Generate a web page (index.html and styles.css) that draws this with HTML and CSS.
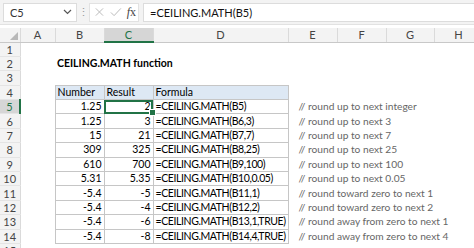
FILE: index.html
```html
<!DOCTYPE html>
<html lang="en">
<head>
  <meta charset="UTF-8">
  <title>CEILING.MATH function</title>
  <link rel="stylesheet" href="styles.css">
</head>
<body>
  <div class="fbar">
    <div class="namebox">
      <span>C5</span>
      <svg width="9" height="6" viewBox="0 0 9 6"><path d="M1 1 L4.5 4.5 L8 1" fill="none" stroke="#555" stroke-width="1.2"/></svg>
    </div>
    <div class="grip">⋮</div>
    <div class="tools">
      <svg width="12" height="12" viewBox="0 0 12 12"><path d="M2 2 L10 10 M10 2 L2 10" stroke="#bbb" stroke-width="1.1"/></svg>
      <svg width="13" height="12" viewBox="0 0 13 12"><path d="M1 6.5 L4.5 10 L12 2" fill="none" stroke="#bbb" stroke-width="1.1"/></svg>
      <span class="fx"><i>f</i>x</span>
    </div>
    <div class="formula">=CEILING.MATH(B5)</div>
  </div>

  <table class="sheet">
    <colgroup>
      <col style="width:20px"><col style="width:35px"><col style="width:49px"><col style="width:49px">
      <col style="width:135px"><col style="width:49px"><col style="width:49px"><col style="width:48px"><col style="width:49px">
    </colgroup>
    <tr class="colhead">
      <th class="corner"><span class="tri"></span></th>
      <th>A</th><th>B</th><th class="active">C</th><th>D</th><th>E</th><th>F</th><th>G</th><th>H</th>
    </tr>
    <tr><th>1</th><td></td><td></td><td></td><td></td><td></td><td></td><td></td><td></td></tr>
    <tr><th>2</th><td></td><td class="title">CEILING.MATH function</td><td></td><td></td><td></td><td></td><td></td><td></td></tr>
    <tr><th>3</th><td></td><td></td><td></td><td></td><td></td><td></td><td></td><td></td></tr>
    <tr><th>4</th><td></td><td class="b hd">Number</td><td class="b hd">Result</td><td class="b hd">Formula</td><td></td><td></td><td></td><td></td></tr>
    <tr><th class="active">5</th><td></td><td class="b num">1.25</td><td class="b num sel">2<span class="handle"></span></td><td class="b fm">=CEILING.MATH(B5)</td><td class="note">// round up to next integer</td><td></td><td></td><td></td></tr>
    <tr><th>6</th><td></td><td class="b num">1.25</td><td class="b num">3</td><td class="b fm">=CEILING.MATH(B6,3)</td><td class="note">// round up to next 3</td><td></td><td></td><td></td></tr>
    <tr><th>7</th><td></td><td class="b num">15</td><td class="b num">21</td><td class="b fm">=CEILING.MATH(B7,7)</td><td class="note">// round up to next 7</td><td></td><td></td><td></td></tr>
    <tr><th>8</th><td></td><td class="b num">309</td><td class="b num">325</td><td class="b fm">=CEILING.MATH(B8,25)</td><td class="note">// round up to next 25</td><td></td><td></td><td></td></tr>
    <tr><th>9</th><td></td><td class="b num">610</td><td class="b num">700</td><td class="b fm">=CEILING.MATH(B9,100)</td><td class="note">// round up to next 100</td><td></td><td></td><td></td></tr>
    <tr><th>10</th><td></td><td class="b num">5.31</td><td class="b num">5.35</td><td class="b fm">=CEILING.MATH(B10,0.05)</td><td class="note">// round up to next 0.05</td><td></td><td></td><td></td></tr>
    <tr><th>11</th><td></td><td class="b num">-5.4</td><td class="b num">-5</td><td class="b fm">=CEILING.MATH(B11,1)</td><td class="note">// round toward zero to next 1</td><td></td><td></td><td></td></tr>
    <tr><th>12</th><td></td><td class="b num">-5.4</td><td class="b num">-4</td><td class="b fm">=CEILING.MATH(B12,2)</td><td class="note">// round toward zero to next 2</td><td></td><td></td><td></td></tr>
    <tr><th>13</th><td></td><td class="b num">-5.4</td><td class="b num">-6</td><td class="b fm">=CEILING.MATH(B13,1,TRUE)</td><td class="note">// round away from zero to next 1</td><td></td><td></td><td></td></tr>
    <tr><th>14</th><td></td><td class="b num">-5.4</td><td class="b num">-8</td><td class="b fm">=CEILING.MATH(B14,4,TRUE)</td><td class="note">// round away from zero to next 4</td><td></td><td></td><td></td></tr>
    <tr><th>15</th><td></td><td></td><td></td><td></td><td></td><td></td><td></td><td></td></tr>
  </table>
</body>
</html>
```

FILE: styles.css
```css
body {
  margin: 0;
  background: #fff;
  font-family: Lato, "Liberation Sans", sans-serif;
  font-size: 10.5px;
  color: #000;
  overflow: hidden;
}
.fbar {
  display: flex;
  align-items: center;
  height: 24px;
  padding: 0 0 0 3px;
  background: #f3f3f3;
  border-bottom: 1px solid #e2e2e2;
  margin-bottom: 3px;
  font-size: 11px;
}
.namebox {
  display: flex;
  align-items: center;
  justify-content: space-between;
  width: 62px;
  height: 17px;
  padding: 0 4px 0 6px;
  background: #fff;
  border: 1px solid #dcdcdc;
  color: #333;
}
.grip {
  width: 12px;
  text-align: center;
  color: #999;
}
.tools {
  display: flex;
  align-items: center;
  gap: 5px;
  width: 42px;
  height: 17px;
  padding: 0 2px 0 4px;
  background: #fff;
  border: 1px solid #e2e2e2;
}
.fx {
  font-family: "Liberation Serif", serif;
  font-size: 12px;
  color: #444;
}
.formula {
  flex: 1;
  height: 17px;
  line-height: 17px;
  margin-left: 4px;
  padding-left: 6px;
  background: #fff;
  border: 1px solid #dcdcdc;
  border-right: none;
  color: #111;
}
.sheet {
  border-collapse: collapse;
  table-layout: fixed;
  width: 483px;
}
.sheet th, .sheet td {
  height: 14.4px;
  padding: 0 2px;
  white-space: nowrap;
  line-height: 13px;
  box-sizing: border-box;
}
.sheet th {
  background: #f3f3f3;
  color: #444;
  font-weight: normal;
  font-size: 11px;
  text-align: center;
  border-right: 1px solid #dadada;
  border-bottom: 1px solid #e4e4e4;
}
.colhead th {
  height: 14px;
  border-bottom: 1px solid #c8c8c8;
}
.sheet th.active {
  background: #d6d6d6;
  color: #217346;
}
.colhead th.active {
  border-bottom: 2px solid #217346;
}
.sheet tr th.active:first-child {
  border-right: 2px solid #217346;
}
.corner {
  position: relative;
}
.tri {
  position: absolute;
  right: 2px;
  bottom: 2px;
  width: 0;
  height: 0;
  border-left: 8px solid transparent;
  border-bottom: 8px solid #b8b8b8;
}
.sheet td {
  overflow: visible;
}
.title {
  font-weight: bold;
}
.b {
  border: 1px solid #c6c6c6;
}
.hd {
  background: #dde8f4;
}
.num {
  text-align: right;
}
.fm {
  letter-spacing: -0.4px;
}
.sheet td.note {
  color: #666;
  font-size: 10.2px;
  padding-left: 10px;
}
.sel {
  position: relative;
  outline: 2px solid #217346;
  outline-offset: -2px;
}
.handle {
  position: absolute;
  right: -3px;
  bottom: -3px;
  width: 5px;
  height: 5px;
  background: #217346;
  border: 1px solid #fff;
}
```
